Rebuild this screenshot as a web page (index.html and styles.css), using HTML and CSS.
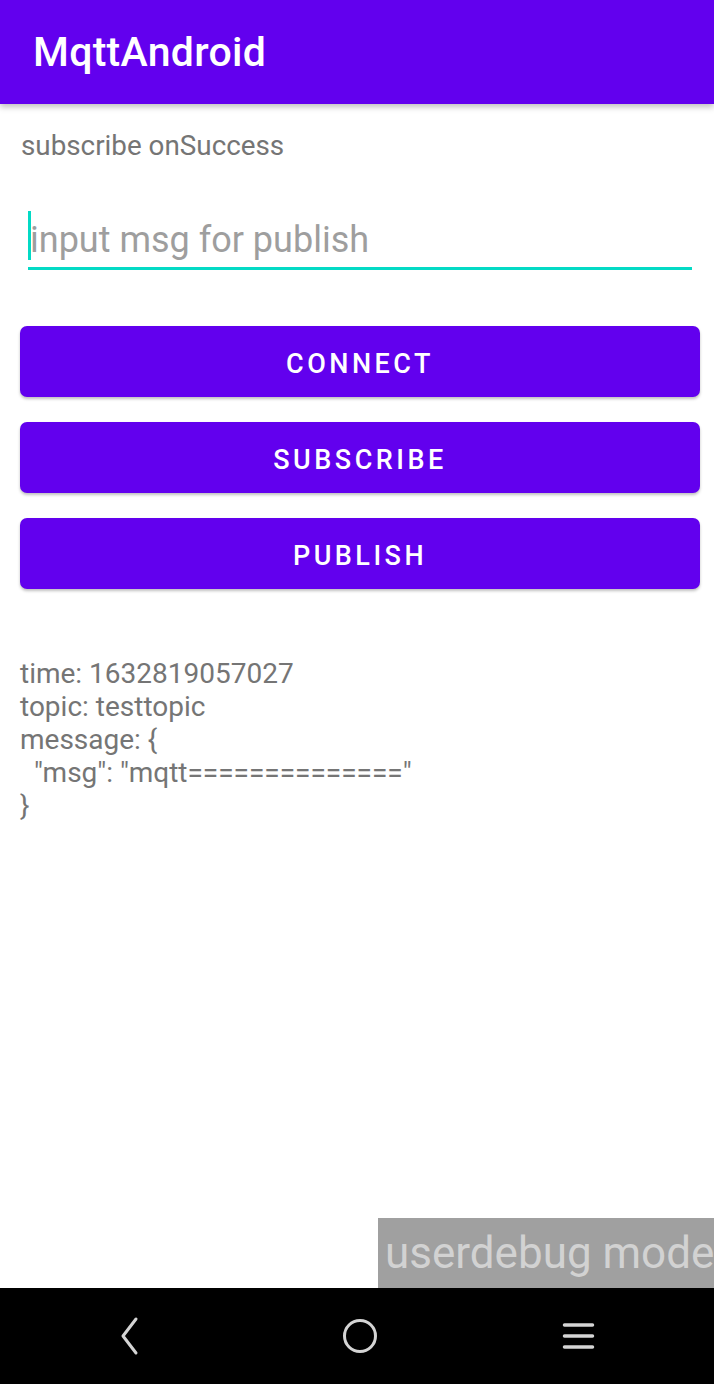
FILE: index.html
```html
<!DOCTYPE html>
<html>
<head>
<meta charset="utf-8">
<link rel="stylesheet" href="styles.css">
</head>
<body>
<div class="screen">
  <header class="appbar"><h1 class="title">MqttAndroid</h1></header>
  <main class="content">
    <p class="status">subscribe onSuccess</p>
    <div class="field">
      <span class="cursor"></span>
      <span class="placeholder">input msg for publish</span>
    </div>
    <div class="buttons">
      <button class="btn">CONNECT</button>
      <button class="btn">SUBSCRIBE</button>
      <button class="btn">PUBLISH</button>
    </div>
    <pre class="log">time: 1632819057027
topic: testtopic
message: {
  "msg": "mqtt=============="
}</pre>
  </main>
  <div class="debug-row"><span class="debug">userdebug mode</span></div>
  <nav class="navbar">
    <svg class="nav-icon" width="40" height="40" viewBox="0 0 40 40"><path d="M18 3 L5 20 L18 37" fill="none" stroke="#d4d4d4" stroke-width="3" stroke-linecap="round" stroke-linejoin="round"/></svg>
    <svg class="nav-icon home" width="40" height="40" viewBox="0 0 40 40"><circle cx="20" cy="20" r="15.5" fill="none" stroke="#d4d4d4" stroke-width="3"/></svg>
    <svg class="nav-icon menu" width="40" height="40" viewBox="0 0 40 40"><path d="M6.5 9 H34.5 M6.5 20 H34.5 M6.5 31 H34.5" fill="none" stroke="#d4d4d4" stroke-width="3.5" stroke-linecap="round"/></svg>
  </nav>
</div>
</body>
</html>
```
FILE: styles.css
```css
html, body {
  margin: 0;
  padding: 0;
  background: #ffffff;
}
.screen {
  width: 714px;
  height: 1384px;
  display: flex;
  flex-direction: column;
  font-family: Roboto, "Liberation Sans", sans-serif;
  overflow: hidden;
}
.appbar {
  height: 104px;
  background: #6200ee;
  display: flex;
  align-items: center;
  padding-left: 33px;
  box-shadow: 0 3px 6px rgba(0,0,0,0.25);
  position: relative;
  z-index: 2;
  flex: none;
}
.title {
  margin: 0;
  color: #ffffff;
  font-size: 41px;
  font-weight: 500;
  letter-spacing: 0.3px;
}
.content {
  flex: 1;
  padding: 0 14px 0 20px;
  display: flex;
  flex-direction: column;
}
.status {
  margin: 25px 0 0 1px;
  font-size: 27.8px;
  line-height: 34px;
  color: #757575;
}
.field {
  margin: 47px 8px 0 8px;
  height: 57px;
  border-bottom: 3px solid #03dac5;
  display: flex;
  align-items: flex-start;
}
.cursor {
  width: 3px;
  height: 49px;
  background: #03dac5;
  margin-top: 1px;
  flex: none;
}
.placeholder {
  font-size: 36px;
  line-height: 54px;
  color: #9e9e9e;
  margin-left: -1px;
  margin-top: 3px;
  white-space: nowrap;
}
.buttons {
  margin-top: 56px;
  display: flex;
  flex-direction: column;
  gap: 25px;
}
.btn {
  height: 71px;
  width: 680px;
  border: none;
  border-radius: 7px;
  background: #6200ee;
  color: #ffffff;
  font-family: Roboto, "Liberation Sans", sans-serif;
  font-size: 27px;
  font-weight: 500;
  letter-spacing: 3.5px;
  box-shadow: 0 2px 3px rgba(0,0,0,0.25);
  padding: 4px 0 0 0;
}
.log {
  margin: 68px 0 0 0;
  font-family: Roboto, "Liberation Sans", sans-serif;
  font-size: 28px;
  line-height: 33px;
  color: #757575;
  white-space: pre;
}
.debug-row {
  display: flex;
  justify-content: flex-end;
  flex: none;
}
.debug {
  width: 336px;
  height: 70px;
  background: #a0a0a0;
  color: #d2d2d2;
  font-size: 44px;
  line-height: 70px;
  padding-left: 7px;
  box-sizing: border-box;
  white-space: nowrap;
  overflow: hidden;
}
.navbar {
  height: 96px;
  background: #000000;
  flex: none;
  display: flex;
  align-items: center;
  padding-left: 118px;
}
.nav-icon {
  display: block;
  flex: none;
}
.home {
  margin-left: 182px;
}
.menu {
  margin-left: 178px;
}
```
